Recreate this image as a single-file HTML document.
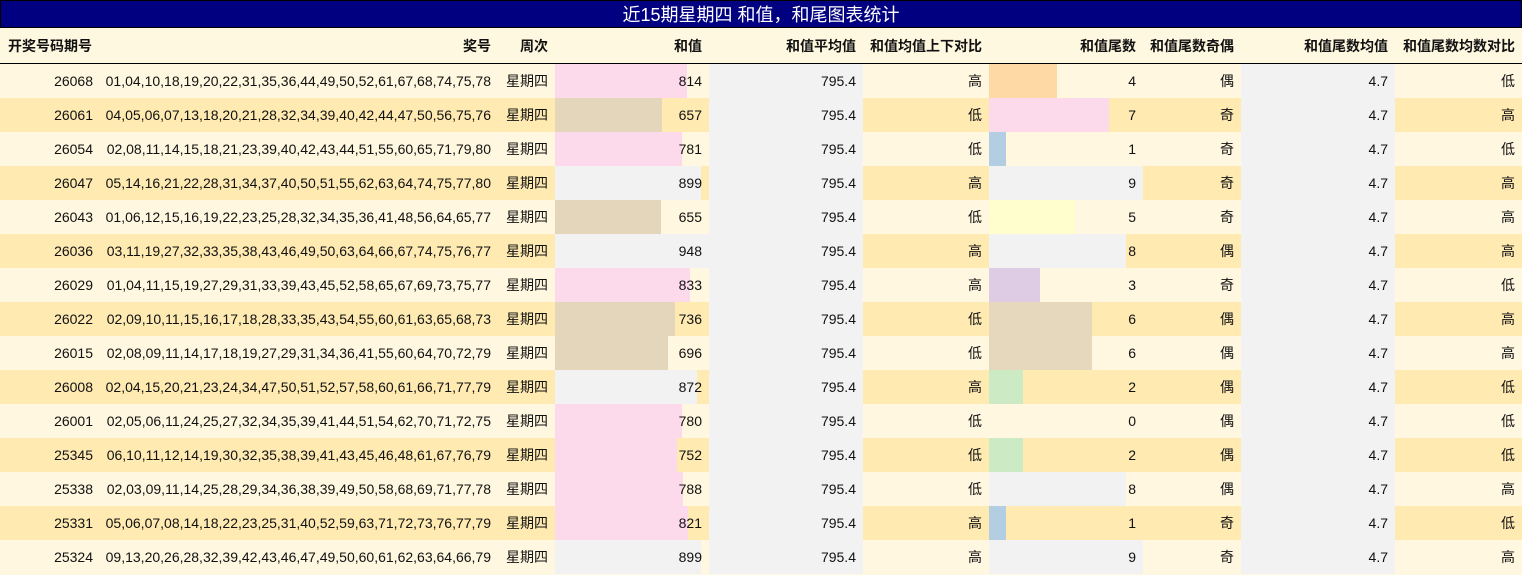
<!DOCTYPE html>
<html><head><meta charset="utf-8"><style>
body{margin:0;width:1522px;height:575px;overflow:hidden;background:#fff8e0;font-family:"Liberation Sans","Noto Sans CJK SC",sans-serif;}
.t{background:#000080;color:#fff;text-align:center;font-size:18px;line-height:28px;border:1px solid #000;box-sizing:border-box;height:28px}
table{border-collapse:collapse;table-layout:fixed;width:1522px}
td,th{height:34px;padding:0 7px 0 0;text-align:right;font-size:14px;color:#111;position:relative;white-space:nowrap;overflow:hidden}
th{font-weight:bold;height:35px;border-bottom:1.5px solid #000;background:#fff8e0}
th:first-child{text-align:left;padding-left:8px}
tr.a td{background:#fff7df}
tr.b td{background:#ffeab2}
td.g{background:#f2f2f2!important}
.bar{position:absolute;left:0;top:0;bottom:0}
span{position:relative}
.p{background:#fcdaeb}.n{background:#e4d6bb}.y{background:#f2f2f2}.o{background:#fed8a5}.bl{background:#b3cde3}.ye{background:#fffecc}.l{background:#decbe4}.gr{background:#ccebc5}.tn{background:#e5d8bd}
</style></head><body>
<div class="t">近15期星期四 和值，和尾图表统计</div>
<table>
<colgroup><col style="width:100px"><col style="width:398px"><col style="width:57px"><col style="width:154px"><col style="width:154px"><col style="width:126px"><col style="width:154px"><col style="width:98px"><col style="width:154px"><col style="width:127px"></colgroup>
<tr><th>开奖号码期号</th><th>奖号</th><th>周次</th><th>和值</th><th>和值平均值</th><th>和值均值上下对比</th><th>和值尾数</th><th>和值尾数奇偶</th><th>和值尾数均值</th><th>和值尾数均数对比</th></tr>
<tr class="a"><td>26068</td><td>01,04,10,18,19,20,22,31,35,36,44,49,50,52,61,67,68,74,75,78</td><td>星期四</td><td><div class="bar p" style="width:132px"></div><span>814</span></td><td class="g">795.4</td><td>高</td><td><div class="bar o" style="width:68px"></div><span>4</span></td><td>偶</td><td class="g">4.7</td><td>低</td></tr>
<tr class="b"><td>26061</td><td>04,05,06,07,13,18,20,21,28,32,34,39,40,42,44,47,50,56,75,76</td><td>星期四</td><td><div class="bar n" style="width:107px"></div><span>657</span></td><td class="g">795.4</td><td>低</td><td><div class="bar p" style="width:120px"></div><span>7</span></td><td>奇</td><td class="g">4.7</td><td>高</td></tr>
<tr class="a"><td>26054</td><td>02,08,11,14,15,18,21,23,39,40,42,43,44,51,55,60,65,71,79,80</td><td>星期四</td><td><div class="bar p" style="width:127px"></div><span>781</span></td><td class="g">795.4</td><td>低</td><td><div class="bar bl" style="width:17px"></div><span>1</span></td><td>奇</td><td class="g">4.7</td><td>低</td></tr>
<tr class="b"><td>26047</td><td>05,14,16,21,22,28,31,34,37,40,50,51,55,62,63,64,74,75,77,80</td><td>星期四</td><td><div class="bar y" style="width:146px"></div><span>899</span></td><td class="g">795.4</td><td>高</td><td><div class="bar y" style="width:154px"></div><span>9</span></td><td>奇</td><td class="g">4.7</td><td>高</td></tr>
<tr class="a"><td>26043</td><td>01,06,12,15,16,19,22,23,25,28,32,34,35,36,41,48,56,64,65,77</td><td>星期四</td><td><div class="bar n" style="width:106px"></div><span>655</span></td><td class="g">795.4</td><td>低</td><td><div class="bar ye" style="width:86px"></div><span>5</span></td><td>奇</td><td class="g">4.7</td><td>高</td></tr>
<tr class="b"><td>26036</td><td>03,11,19,27,32,33,35,38,43,46,49,50,63,64,66,67,74,75,76,77</td><td>星期四</td><td><div class="bar y" style="width:154px"></div><span>948</span></td><td class="g">795.4</td><td>高</td><td><div class="bar y" style="width:137px"></div><span>8</span></td><td>偶</td><td class="g">4.7</td><td>高</td></tr>
<tr class="a"><td>26029</td><td>01,04,11,15,19,27,29,31,33,39,43,45,52,58,65,67,69,73,75,77</td><td>星期四</td><td><div class="bar p" style="width:135px"></div><span>833</span></td><td class="g">795.4</td><td>高</td><td><div class="bar l" style="width:51px"></div><span>3</span></td><td>奇</td><td class="g">4.7</td><td>低</td></tr>
<tr class="b"><td>26022</td><td>02,09,10,11,15,16,17,18,28,33,35,43,54,55,60,61,63,65,68,73</td><td>星期四</td><td><div class="bar n" style="width:120px"></div><span>736</span></td><td class="g">795.4</td><td>低</td><td><div class="bar tn" style="width:103px"></div><span>6</span></td><td>偶</td><td class="g">4.7</td><td>高</td></tr>
<tr class="a"><td>26015</td><td>02,08,09,11,14,17,18,19,27,29,31,34,36,41,55,60,64,70,72,79</td><td>星期四</td><td><div class="bar n" style="width:113px"></div><span>696</span></td><td class="g">795.4</td><td>低</td><td><div class="bar tn" style="width:103px"></div><span>6</span></td><td>偶</td><td class="g">4.7</td><td>高</td></tr>
<tr class="b"><td>26008</td><td>02,04,15,20,21,23,24,34,47,50,51,52,57,58,60,61,66,71,77,79</td><td>星期四</td><td><div class="bar y" style="width:142px"></div><span>872</span></td><td class="g">795.4</td><td>高</td><td><div class="bar gr" style="width:34px"></div><span>2</span></td><td>偶</td><td class="g">4.7</td><td>低</td></tr>
<tr class="a"><td>26001</td><td>02,05,06,11,24,25,27,32,34,35,39,41,44,51,54,62,70,71,72,75</td><td>星期四</td><td><div class="bar p" style="width:127px"></div><span>780</span></td><td class="g">795.4</td><td>低</td><td><span>0</span></td><td>偶</td><td class="g">4.7</td><td>低</td></tr>
<tr class="b"><td>25345</td><td>06,10,11,12,14,19,30,32,35,38,39,41,43,45,46,48,61,67,76,79</td><td>星期四</td><td><div class="bar p" style="width:122px"></div><span>752</span></td><td class="g">795.4</td><td>低</td><td><div class="bar gr" style="width:34px"></div><span>2</span></td><td>偶</td><td class="g">4.7</td><td>低</td></tr>
<tr class="a"><td>25338</td><td>02,03,09,11,14,25,28,29,34,36,38,39,49,50,58,68,69,71,77,78</td><td>星期四</td><td><div class="bar p" style="width:128px"></div><span>788</span></td><td class="g">795.4</td><td>低</td><td><div class="bar y" style="width:137px"></div><span>8</span></td><td>偶</td><td class="g">4.7</td><td>高</td></tr>
<tr class="b"><td>25331</td><td>05,06,07,08,14,18,22,23,25,31,40,52,59,63,71,72,73,76,77,79</td><td>星期四</td><td><div class="bar p" style="width:133px"></div><span>821</span></td><td class="g">795.4</td><td>高</td><td><div class="bar bl" style="width:17px"></div><span>1</span></td><td>奇</td><td class="g">4.7</td><td>低</td></tr>
<tr class="a"><td>25324</td><td>09,13,20,26,28,32,39,42,43,46,47,49,50,60,61,62,63,64,66,79</td><td>星期四</td><td><div class="bar y" style="width:146px"></div><span>899</span></td><td class="g">795.4</td><td>高</td><td><div class="bar y" style="width:154px"></div><span>9</span></td><td>奇</td><td class="g">4.7</td><td>高</td></tr>
</table>
</body></html>
